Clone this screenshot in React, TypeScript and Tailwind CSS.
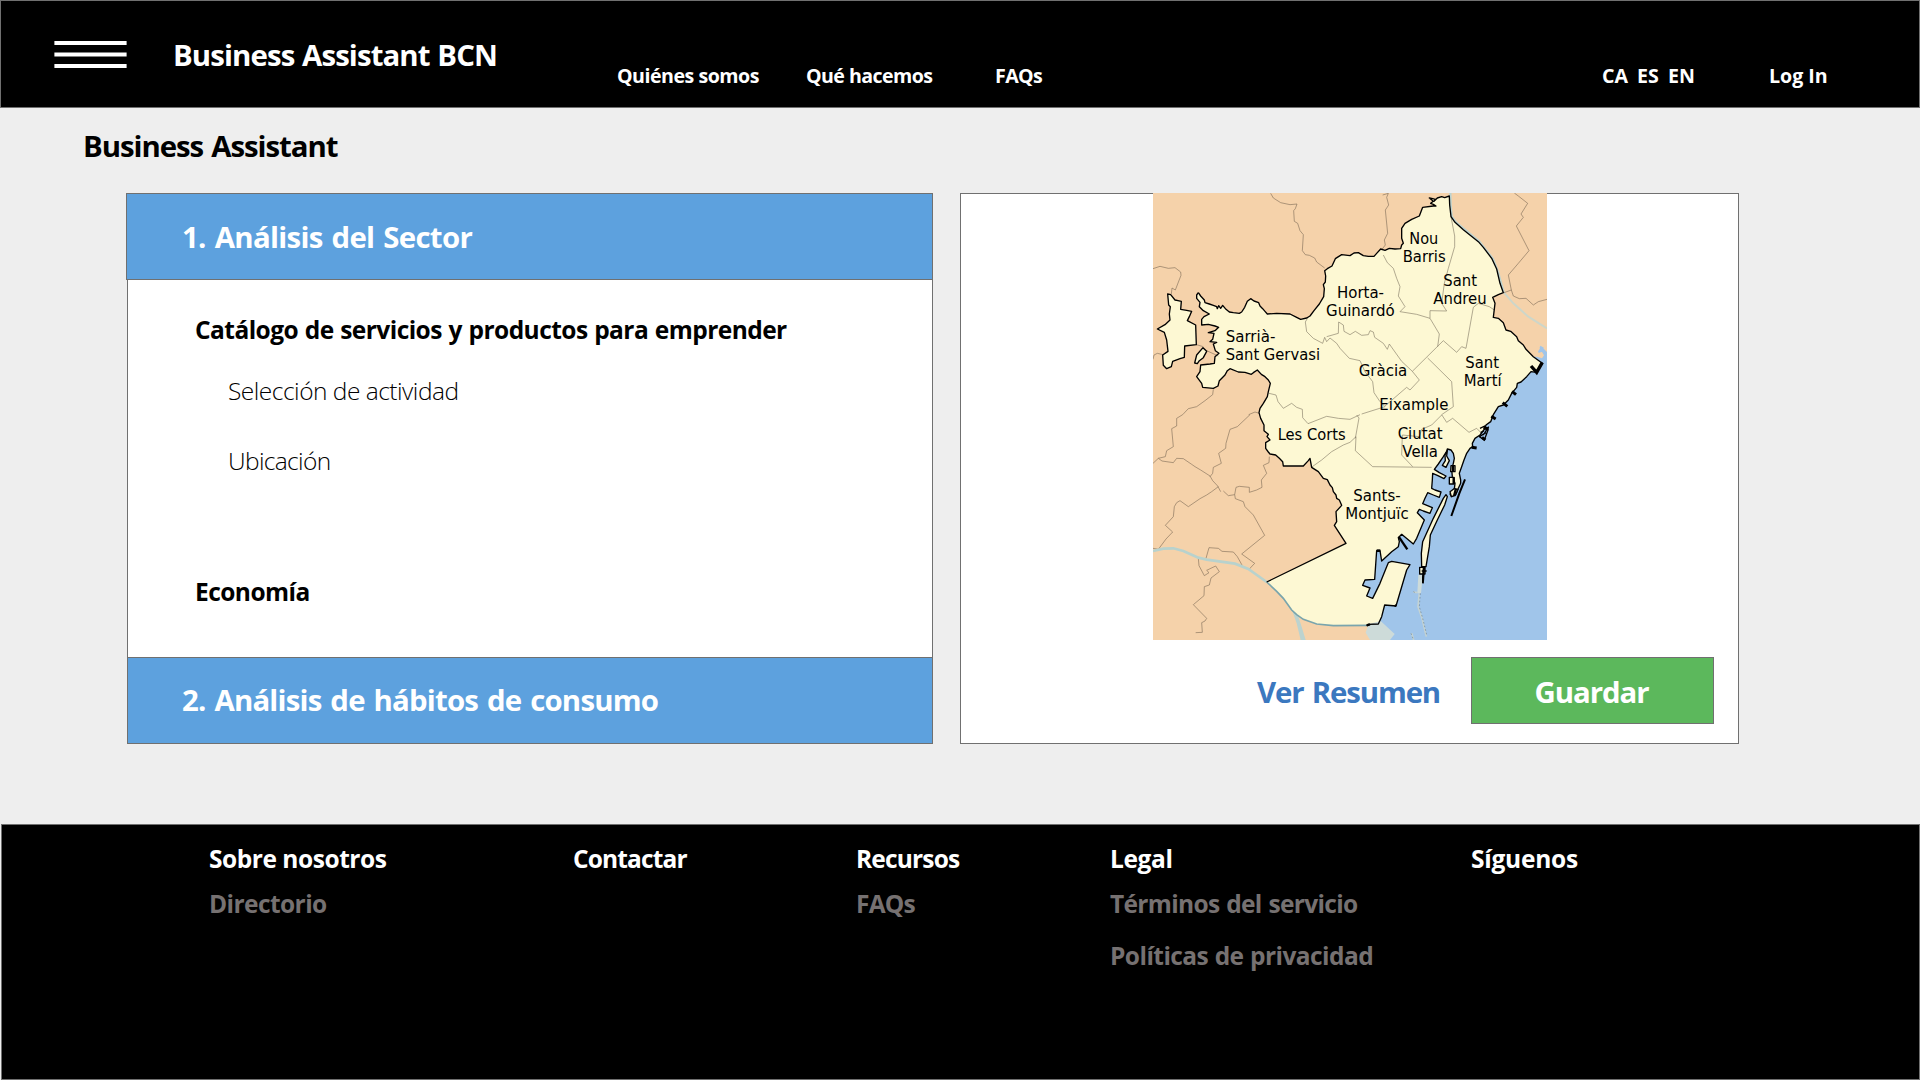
import React from "react";

const CITY =
  "M145 308L152 318 163 330 165 338 178 342 190 346 200 350 202 356 206 347 212 355 218 346 228 358 238 366 250 368 268 370 275 366 284 352 292 334 302 326 312 333 326 338 330 348 338 356 345 364 352 372 380 370 420 372 440 382 452 388 470 384 480 378 492 362 508 342 521 320 523 296 520 284 526 276 527 258 524 242 532 236 546 228 556 206 575 194 600 197 612 189 625 188 640 197 655 199 672 199 680 190 692 177 705 181 718 175 735 177 752 176 755 165 760 160 755 145 755 115 765 100 785 88 808 78 818 52 850 48 858 48 850 43 842 40 850 34 838 24 848 26 856 28 852 34 862 24 875 20 884 23 898 18 899 45 903 80 915 97 940 119 985 155 1000 172 1025 205 1040 237 1050 280 1060 308 1045 314 1028 322 1035 340 1030 382 1045 385 1060 398 1068 420 1082 424 1100 440 1105 452 1120 465 1128 478 1150 500 1177 520 1160 547 1143 545 1130 560 1113 576 1102 580 1100 592 1085 610 1075 630 1060 645 1045 650 1030 674 1022 695 1008 705 1003 718 990 735 975 745 967 760 968 770 960 775 950 790 942 810 935 830 928 850 932 870 932 880 925 895 918 912 905 920 900 912 912 905 915 880 907 860 905 838 910 820 913 805 910 790 903 780 892 777 890 784 880 800 865 822 853 838 868 848 888 858 882 866 862 856 848 850 847 870 845 895 855 900 873 906 868 922 850 915 833 908 825 925 818 941 847 953 840 970 820 963 808 958 802 968 823 990 800 1045 790 1062 755 1033 745 1043 748 1055 745 1070 725 1085 695 1113 690 1082 680 1082 678 1110 674 1168 645 1170 638 1186 660 1194 650 1218 668 1225 690 1180 710 1130 715 1118 725 1114 780 1124 770 1140 738 1248 704 1245 695 1280 685 1302 655 1303 650 1307";
const RIVER_EDGE = "600 1305 550 1307 500 1302 460 1288 440 1274 425 1260 400 1225 380 1204 350 1176";
const SOUTHWEST =
  "L588 1060 553 1006 560 995 558 965 575 946 568 930 560 925 558 915 550 905 547 893 540 885 532 869 520 865 505 845 485 832 480 805 475 812 460 828 400 828 398 815 388 805 377 795 360 792 355 786 347 775 347 758 360 750 351 740 355 733 342 722 342 705 332 685 327 668 330 655 340 640 352 620 355 605 361 580 355 570 345 560 334 553 322 540 310 548 304 553 285 547 265 546 240 536 232 542 225 555 208 572 204 588 190 595 158 592 155 580 140 560 150 545 152 525 180 522 193 520 195 500 207 490 196 482 190 462 200 457 180 455 188 448 192 430 175 428 195 422 206 412 195 408 175 403 155 405 155 388 162 380 178 372 160 362 148 350 150 337 140 325 140 315Z";

const ENCLAVE =
  "M53 312L62 314 75 330 84 332 94 334 92 358 110 361 125 364 118 380 112 392 137 405 139 464 104 468 103 502 90 506 68 514 64 530 50 536 40 526 38 495 54 484 50 450 43 427 22 417 45 404 60 390 58 372 61 350 56 345Z";
const ISLET = "M159 473L170 484 160 503 148 512 142 521 134 519 140 495Z";

const MUNICIPAL_LINES = [
  "M362 10L370 24 392 38 420 44 441 42 436 56 431 62 433 94 443 100 450 122 460 134 457 182 466 194 478 196 494 204 500 216 524 234",
  "M9 236L30 229 55 235 75 233 92 246 93 256 76 300 66 294 64 312",
  "M9 508L12 495 22 490 40 494",
  "M139 464L160 470M170 482L205 498",
  "M190 598L188 614 165 632 140 650 115 656 98 674 80 685 80 708 65 716 70 770 50 782 46 800 25 805 9 820",
  "M25 805L36 813 70 818 80 805 100 806 125 823 135 830 152 840 180 858 188 872 203 888 212 905",
  "M300 674L262 710 240 718 228 760 227 775 206 790 214 820 190 832 188 850 180 860",
  "M205 890L185 905 170 915 150 926 115 950 90 932 80 938 73 950 70 980 46 1006 68 1026 48 1047 25 1078 9 1075",
  "M220 903L235 917 254 914 258 892 268 889 298 892 298 907 320 900 336 892 334 870 350 850 340 826 357 818 358 800",
  "M254 914L256 926 280 935 285 950 310 975 344 1036 275 1092 314 1120 298 1137",
  "M168 1105L177 1073 205 1075 216 1084 250 1086 262 1100 277 1127",
  "M145 1105L147 1127 163 1157 177 1148 170 1141 197 1128 208 1145 183 1164 178 1185 163 1190 162 1217 130 1244 170 1285 165 1293 155 1298 157 1327 137 1328",
  "M698 15L715 10 710 22 716 45 706 60 713 130 703 150 706 165 696 178",
  "M1093 9L1105 18 1133 40 1113 72 1120 82 1099 108 1137 182 1105 220 1075 255 1084 300 1062 308",
  "M1084 300L1090 318 1108 326 1128 325 1150 345 1165 335 1191 328",
  "M328 670L315 666 296 674",
];

const DISTRICT_LINES = [
  "M474 382L466 396 470 425 490 445 518 460 524 442 530 455 540 444 560 460 570 475 598 505 630 512 645 545 668 575 672 608 688 632 705 650 635 672",
  "M530 440L565 430 566 396 580 405 582 424 600 434 616 424 635 436 655 434 660 422 670 426 674 442 700 460 712 478 718 462 735 486 755 514 787 544",
  "M787 544L880 452 920 487 935 470 948 475 970 352 985 340 1018 350 1033 360",
  "M787 544L808 570 780 600 770 592 705 648",
  "M700 195L712 218 730 235 740 265 750 290 745 318 765 350 750 365 800 373 840 385 840 362 890 363 875 340 883 280 895 235 914 170 914 138 903 80",
  "M840 385L868 432 863 470",
  "M833 504L905 575 910 650 875 674 890 697 908 685 957 727 980 715 995 730",
  "M357 610L378 615 384 635 400 655 425 640 440 652 457 658 458 683 474 701 530 679 565 685 600 688 630 674",
  "M600 757L580 765 545 785 515 810 484 832",
  "M600 757L618 740 616 782 668 830 845 832M616 745L627 684 620 675",
  "M875 675L845 705 815 718 808 740 757 735 755 795 788 830",
];

const LABELS: { x: number; y: number; w: number; text: string }[] = [
  { x: 780, y: 161, w: 83, text: "Nou" },
  { x: 760, y: 216, w: 125, text: "Barris" },
  { x: 882, y: 287, w: 97, text: "Sant" },
  { x: 852, y: 342, w: 156, text: "Andreu" },
  { x: 563, y: 324, w: 137, text: "Horta-" },
  { x: 530, y: 378, w: 202, text: "Guinardó" },
  { x: 229, y: 455, w: 145, text: "Sarrià-" },
  { x: 229, y: 510, w: 279, text: "Sant Gervasi" },
  { x: 628, y: 556, w: 142, text: "Gràcia" },
  { x: 948, y: 534, w: 97, text: "Sant" },
  { x: 943, y: 588, w: 110, text: "Martí" },
  { x: 690, y: 660, w: 203, text: "Eixample" },
  { x: 385, y: 749, w: 200, text: "Les Corts" },
  { x: 745, y: 747, w: 131, text: "Ciutat" },
  { x: 759, y: 801, w: 103, text: "Vella" },
  { x: 612, y: 931, w: 138, text: "Sants-" },
  { x: 588, y: 986, w: 186, text: "Montjuïc" },
];

function DistrictMap() {
  return (
    <svg viewBox="9 9 1182 1341" className="block h-[447px] w-[394px] shrink-0">
      <rect x="9" y="9" width="1182" height="1341" fill="#f5d2aa" />
      <path
        d="M1191 490L1180 476 1172 470 1166 482 1176 486 1182 496 1176 505 1160 500 1150 500 1000 600 820 740 640 1000 600 1120 640 1303 690 1303 660 1350 1191 1350Z"
        fill="#a0c5ea"
      />
      <path d="M1180 476L1170 470M1165 486L1180 480 1191 490" stroke="#a0c5ea" strokeWidth="6" fill="none" />
      <path d="M901 9L902 50 905 80 918 97 988 155 1029 207 1044 246 1061 308" fill="none" stroke="#bcd3cf" strokeWidth="7" />
      <path d="M1062 308L1090 340 1135 380 1191 415" fill="none" stroke="#cdd6c9" strokeWidth="6" />
      <path d={`${CITY} ${RIVER_EDGE} ${SOUTHWEST}`} fill="#fdf8d3" />
      <g fill="none" stroke="#4b4033" strokeWidth="1.7" opacity="0.75">
        {MUNICIPAL_LINES.map((d) => (
          <path key={d} d={d} />
        ))}
        {DISTRICT_LINES.map((d) => (
          <path key={d} d={d} />
        ))}
      </g>
      <path d="M9 1083L40 1076 70 1075 100 1083 145 1103 170 1109 255 1121 295 1137 350 1176" fill="none" stroke="#b8d2cd" strokeWidth="8" />
      <path d="M427 1263L440 1300 452 1350 467 1350 455 1310 444 1277Z" fill="#bcd3cf" />
      <path
        d="M350 1176L380 1204 400 1225 425 1260 440 1274 460 1288 500 1302 550 1307 655 1306"
        fill="none"
        stroke="#79a5ad"
        strokeWidth="5"
      />
      <path d="M655 1303L692 1293 734 1332 720 1350 660 1350 647 1328Z" fill="#cddbd9" />
      <g strokeLinejoin="round" stroke="#000" strokeWidth="4">
        <path d={CITY} fill="none" />
        <path d={`M350 1176${SOUTHWEST.replace("Z", "")} L145 308`} fill="none" />
        <path d={ENCLAVE} fill="#fdf8d3" />
        <path d={ISLET} fill="#fdf8d3" />
        <path
          d="M888 914L892 920 884 945 862 990 841 1035 838 1070 833 1100 828 1130 815 1130 814 1090 818 1055 850 985 880 925Z"
          fill="#fdf8d3"
        />
        <path d="M809 1132H825V1152H809ZM815 1143H830" fill="#fdf8d3" />
        <path d="M892 782L890 798 898 812 888 832 877 826 886 812 885 795Z" fill="#fdf8d3" />
        <path d="M903 827H915V845H902ZM898 862H912V882H898ZM900 905L912 896 924 898 916 916 904 920Z" fill="#fdf8d3" />
        <path d="M990 715L1004 708 1014 720 1003 750 988 740 1008 728M1016 710L1000 735M992 728L1002 722" fill="none" />
      </g>
      <g fill="none" stroke="#000">
        <path d="M945 868L928 910 904 978" strokeWidth="6" />
        <path d="M909 825V845M911 862V882M918 896L912 918" strokeWidth="7" />
        <path d="M822 1130L818 1180" strokeWidth="7" />
        <path d="M746 1040L772 1078" strokeWidth="7" />
        <path d="M680 1082H691" strokeWidth="8" />
        <path d="M1143 528L1160 547 1177 517" strokeWidth="10" />
        <path d="M1086 604L1098 614M1058 638L1072 649M1024 679L1037 687M965 772L980 774M1000 714L1016 716M996 742L1006 750" strokeWidth="9" />
        <path d="M734 1246L739 1248M650 1306L660 1303" strokeWidth="7" />
      </g>
      <path d="M805 1155H816V1180L813 1210H802Z" fill="#cddbd9" />
      <path d="M808 1210L804 1250 816 1285 829 1340M790 1206L802 1208M785 1330L791 1350" fill="none" stroke="#c4d3d3" strokeWidth="5" />
      <path d="M811 1210L808 1250 818 1285 831 1338M790 1205L800 1210M783 1330L790 1348" fill="none" stroke="#6f8390" strokeWidth="2" strokeDasharray="5 6" />
      <g fill="#000" fontSize="45" fontFamily="'DejaVu Sans', sans-serif">
        {LABELS.map((l) => (
          <text key={`${l.text}${l.x}`} x={l.x - 2} y={l.y + 1} textLength={l.w + 4} lengthAdjust="spacingAndGlyphs">
            {l.text}
          </text>
        ))}
      </g>
    </svg>
  );
}

function Header() {
  return (
    <header className="flex h-[108px] items-start border border-[#707070] bg-black text-[19.6px] leading-[28px] font-bold whitespace-nowrap text-white">
      <button aria-label="Menú" className="mt-10 ml-[53px] shrink-0">
        <svg viewBox="0 0 73 27" className="block h-[27px] w-[73px]" fill="#fff">
          <rect x="0.4" width="72.2" height="4" />
          <rect x="0.4" y="11.5" width="72.2" height="4" />
          <rect x="0.4" y="23" width="72.2" height="4" />
        </svg>
      </button>
      <div className="mt-[34px] ml-[46px] w-[444px] shrink-0 text-[29.4px] leading-[40px] tracking-[-0.9px] [word-spacing:1px]">
        Business Assistant BCN
      </div>
      <nav className="flex pt-[61px]">
        <a className="w-[189px] tracking-[-0.49px]">Quiénes somos</a>
        <a className="w-[189px] tracking-[-0.56px]">Qué hacemos</a>
        <a className="w-[607px] tracking-[-0.6px]">FAQs</a>
        <a className="w-[167px] [word-spacing:4px]">CA ES EN</a>
        <a>Log In</a>
      </nav>
    </header>
  );
}

function AnalysisPanel() {
  return (
    <section className="w-[807px] whitespace-nowrap">
      <h2 className="h-[87px] border border-[#707070] bg-[#5da1de] pt-[23px] pl-[55px] text-[29.4px] leading-[40px] font-bold tracking-[-0.7px] text-white [word-spacing:2px]">
        1. Análisis del Sector
      </h2>
      <div className="ml-px h-[377px] border-x border-[#707070] bg-white pt-[34px] pl-[67px] text-[24.5px] leading-8 text-black">
        <h3 className="font-bold tracking-[-0.55px] [word-spacing:0.8px]">Catálogo de servicios y productos para emprender</h3>
        <p className="mt-[29px] ml-[33px] font-light tracking-[-0.5px]">Selección de actividad</p>
        <p className="mt-[38px] ml-[33px] font-light tracking-[-0.65px]">Ubicación</p>
        <h3 className="mt-[99px] font-bold tracking-[-0.55px]">Economía</h3>
      </div>
      <h2 className="ml-px h-[87px] border border-[#707070] bg-[#5da1de] pt-[22px] pl-[54px] text-[29.4px] leading-[40px] font-bold tracking-[-0.8px] text-white [word-spacing:2px]">
        2. Análisis de hábitos de consumo
      </h2>
    </section>
  );
}

function MapPanel() {
  return (
    <section className="flex h-[551px] w-[779px] flex-col border border-[#707070] bg-white">
      <div className="-mt-px pl-[192px]">
        <DistrictMap />
      </div>
      <div className="mt-[17px] flex justify-end pr-6 text-[29.4px] leading-[40px] font-bold">
        <a className="w-[214px] pt-[15px] tracking-[-1.15px] text-[#3b78bf] [word-spacing:2px]">Ver Resumen</a>
        <button className="flex h-[67px] w-[243px] justify-center border border-[#707070] bg-[#5cb85c] pt-[14px] pr-[2px] tracking-[-1.05px] text-white">
          Guardar
        </button>
      </div>
    </section>
  );
}

function Footer() {
  return (
    <footer className="ml-px flex h-[256px] border border-[#707070] bg-black pt-[18px] pl-[207px] text-[24.5px] leading-8 font-bold whitespace-nowrap text-[#767171]">
      <div className="w-[364px]">
        <h4 className="tracking-[-0.46px] text-white">Sobre nosotros</h4>
        <p className="mt-[13px] tracking-[-0.57px]">Directorio</p>
      </div>
      <div className="w-[283px]">
        <h4 className="tracking-[-0.85px] text-white">Contactar</h4>
      </div>
      <div className="w-[254px]">
        <h4 className="tracking-[-0.83px] text-white">Recursos</h4>
        <p className="mt-[13px] tracking-[-0.77px]">FAQs</p>
      </div>
      <div className="w-[361px]">
        <h4 className="tracking-[-0.37px] text-white">Legal</h4>
        <p className="mt-[13px] tracking-[-0.66px] [word-spacing:1px]">Términos del servicio</p>
        <p className="mt-[20px] tracking-[-0.55px] [word-spacing:0.6px]">Políticas de privacidad</p>
      </div>
      <div>
        <h4 className="tracking-[-0.24px] text-white">Síguenos</h4>
      </div>
    </footer>
  );
}

export default function App() {
  return (
    <div className="h-[1080px] w-[1920px] overflow-hidden bg-[#eeeeee] font-['Open_Sans','Noto_Sans',sans-serif]">
      <Header />
      <main className="h-[716px] pt-[18px]">
        <h1 className="ml-[83px] text-[29.4px] leading-[40px] font-bold tracking-[-1.05px] text-black [word-spacing:1.5px]">
          Business Assistant
        </h1>
        <div className="mt-[27px] ml-[126px] flex gap-[27px]">
          <AnalysisPanel />
          <MapPanel />
        </div>
      </main>
      <Footer />
    </div>
  );
}
